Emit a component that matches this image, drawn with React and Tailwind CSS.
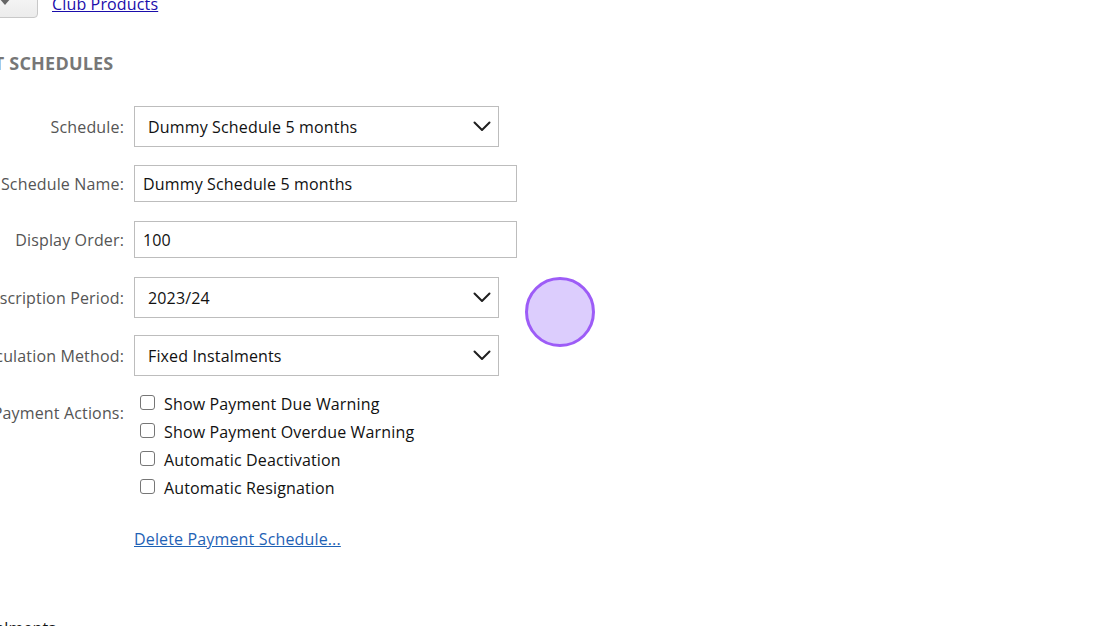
import { useState } from 'react'

const Chevron = () => (
  <svg width="18" height="11" viewBox="0 0 18 11" fill="none" className="shrink-0">
    <path d="M1.5 1.5 L9 9 L16.5 1.5" stroke="#1f1f1f" strokeWidth="2" strokeLinecap="round" strokeLinejoin="round" />
  </svg>
)

function Row({ label, children, className = '' }) {
  return (
    <div className={`flex items-center ${className}`}>
      <div className="w-[234px] shrink-0 text-right whitespace-nowrap text-[16px] text-[#555]">{label}</div>
      <div className="ml-[10px]">{children}</div>
    </div>
  )
}

function Select({ value }) {
  return (
    <div className="w-[365px] h-[41px] border border-[#bdbdbd] bg-white flex items-center justify-between pl-[13px] pr-[7px] text-[16px] text-[#111]">
      <span>{value}</span>
      <Chevron />
    </div>
  )
}

function TextInput({ value }) {
  return (
    <input
      readOnly
      defaultValue={value}
      className="w-[383px] h-[37px] border border-[#bdbdbd] bg-white px-[8px] text-[16px] tracking-[0.15px] text-[#111] outline-none font-['Open_Sans',sans-serif]"
    />
  )
}

const actions = [
  'Show Payment Due Warning',
  'Show Payment Overdue Warning',
  'Automatic Deactivation',
  'Automatic Resignation',
]

export default function App() {
  const [checked, setChecked] = useState({})

  return (
    <div className="relative w-[1120px] h-[626px] overflow-hidden bg-white font-['Open_Sans',sans-serif] tracking-[0.15px]">
      <div className="-ml-[110px] -mt-[16px]">
        <div className="flex h-[34px]">
          <div className="ml-[92px] w-[56px] h-[34px] rounded-[4px] border border-[#c8c8c8] bg-gradient-to-b from-[#fafafa] to-[#ececec] flex items-center justify-center pr-[10px]">
            <span className="block w-0 h-0 border-l-[6px] border-r-[6px] border-t-[7px] border-l-transparent border-r-transparent border-t-[#666]" />
          </div>
          <a href="#" className="ml-[14px] mt-[9px] text-[16px] leading-[22px] text-[#1a0dab] underline">Club Products</a>
        </div>

        <h2 className="mt-[33px] pl-[26px] text-[18px] leading-[24px] font-bold tracking-[0.2px] text-[#777]">PAYMENT SCHEDULES</h2>

        <div className="mt-[31px]">
          <Row label="Schedule:">
            <Select value="Dummy Schedule 5 months" />
          </Row>
          <Row label="Schedule Name:" className="mt-[18px]">
            <TextInput value="Dummy Schedule 5 months" />
          </Row>
          <Row label="Display Order:" className="mt-[19px]">
            <TextInput value="100" />
          </Row>
          <Row label="Subscription Period:" className="mt-[19px]">
            <Select value="2023/24" />
          </Row>
          <Row label="Calculation Method:" className="mt-[17px]">
            <Select value="Fixed Instalments" />
          </Row>

          <div className="flex mt-[14px]">
            <div className="w-[234px] shrink-0 text-right whitespace-nowrap text-[16px] leading-[28px] pt-[9px] text-[#555]">Payment Actions:</div>
            <div className="ml-[10px]">
              {actions.map(a => (
                <label key={a} className="flex items-center h-[28px] cursor-pointer" onClick={() => setChecked(c => ({ ...c, [a]: !c[a] }))}>
                  <span className="ml-[6px] mb-[4px] w-[15px] h-[15px] rounded-[3px] border border-[#767676] bg-white flex items-center justify-center text-[11px] leading-none">
                    {checked[a] ? '✓' : ''}
                  </span>
                  <span className="ml-[9px] text-[16px] text-[#111]">{a}</span>
                </label>
              ))}
              <a href="#" className="block mt-[23px] text-[16px] leading-[28px] text-[#1f62b5] underline">Delete Payment Schedule...</a>
            </div>
          </div>
        </div>

        <div className="mt-[63px] pl-[77px] text-[16px] leading-[24px] text-[#111]">Instalments</div>
      </div>

      <div className="absolute left-[525px] top-[277px] w-[70px] h-[70px] rounded-full border-[3px] border-[#9d5cf7] bg-[#dccdfd]" />
    </div>
  )
}
